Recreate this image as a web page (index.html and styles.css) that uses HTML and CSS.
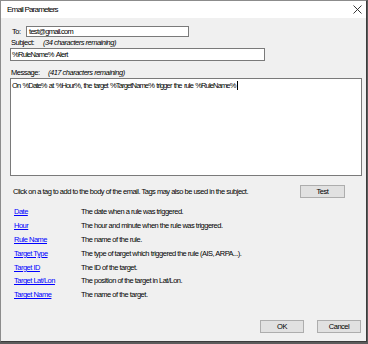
FILE: index.html
```html
<!DOCTYPE html>
<html>
<head>
<meta charset="utf-8">
<link rel="stylesheet" href="styles.css">
</head>
<body>
<div class="window">
  <div class="titlebar">
    <span class="title">Email Parameters</span>
    <svg class="close" width="9" height="9" viewBox="0 0 9 9"><path d="M0.5 0.5 L8.5 8.5 M8.5 0.5 L0.5 8.5" stroke="#222" stroke-width="0.9" fill="none"/></svg>
  </div>
  <div class="content">
    <div class="to-row">
      <span class="to-label">To:</span>
      <div class="field to-field">test@gmail.com</div>
    </div>
    <div class="label-row">
      <span class="subj-label">Subject:</span>
      <span class="note">(34 characters remaining)</span>
    </div>
    <div class="field subj-field">%RuleName% Alert</div>
    <div class="label-row msg-row">
      <span class="msg-label">Message:</span>
      <span class="note">(417 characters remaining)</span>
    </div>
    <div class="field message">On %Date% at %Hour%, the target %TargetName% trigger the rule %RuleName%<span class="caret"></span></div>
    <div class="hint-row">
      <span class="hint">Click on a tag to add to the body of the email. Tags may also be used in the subject.</span>
      <button class="btn test-btn">Test</button>
    </div>
    <div class="tags">
      <a class="tag">Date</a><span class="desc">The date when a rule was triggered.</span>
      <a class="tag">Hour</a><span class="desc">The hour and minute when the rule was triggered.</span>
      <a class="tag">Rule Name</a><span class="desc">The name of the rule.</span>
      <a class="tag">Target Type</a><span class="desc">The type of target which triggered the rule (AIS, ARPA...).</span>
      <a class="tag">Target ID</a><span class="desc">The ID of the target.</span>
      <a class="tag">Target Lat/Lon</a><span class="desc">The position of the target in Lat/Lon.</span>
      <a class="tag">Target Name</a><span class="desc">The name of the target.</span>
    </div>
    <div class="footer">
      <button class="btn">OK</button>
      <button class="btn">Cancel</button>
    </div>
  </div>
</div>
</body>
</html>
```

FILE: styles.css
```css
html, body {
  margin: 0;
  padding: 0;
}
body {
  width: 368px;
  height: 344px;
  background: #5c5c5c;
  overflow: hidden;
  font-family: "Liberation Sans", Arial, sans-serif;
  font-size: 7.5px;
  letter-spacing: -0.5px;
  color: #000;
}
.window {
  box-sizing: border-box;
  width: 367px;
  height: 342px;
  background: #f0f0f0;
  border: 1px solid #8c8c8c;
  border-right-color: #3c3c3c;
  border-bottom-color: #3c3c3c;
  display: flex;
  flex-direction: column;
}
.titlebar {
  height: 17px;
  background: #fff;
  display: flex;
  align-items: center;
  justify-content: space-between;
  padding: 0 4px 0 6px;
}
.title {
  font-size: 8px;
  letter-spacing: -0.8px;
  line-height: 10px;
}
.close {
  display: block;
}
.content {
  padding: 8px 4px 0 9px;
  display: flex;
  flex-direction: column;
}
.to-row {
  display: flex;
  align-items: center;
  height: 11px;
}
.to-label {
  width: 14px;
  margin-left: 2px;
}
.field {
  box-sizing: border-box;
  background: #fff;
  border: 1px solid #7a7a7a;
  line-height: 9px;
  white-space: nowrap;
}
.to-field {
  width: 163px;
  height: 11px;
  padding: 0 2px;
  letter-spacing: -0.7px;
}
.label-row {
  display: flex;
  align-items: center;
  height: 10px;
  line-height: 10px;
  margin-top: 1px;
}
.subj-label {
  width: 32px;
  margin-left: 1px;
}
.msg-label {
  width: 37px;
  margin-left: 1px;
}
.note {
  font-style: italic;
}
.subj-field {
  width: 255px;
  height: 13px;
  padding: 1px 1px;
  letter-spacing: -0.7px;
  word-spacing: 1px;
}
.msg-row {
  margin-top: 7px;
}
.message {
  width: 352px;
  height: 98px;
  padding: 2px 1px;
  line-height: 10px;
  letter-spacing: -0.85px;
  word-spacing: 1px;
}
.caret {
  display: inline-block;
  width: 0;
  height: 9px;
  border-left: 1px solid #000;
  vertical-align: -2px;
  margin-left: 1px;
}
.hint-row {
  display: flex;
  align-items: center;
  justify-content: space-between;
  height: 13px;
  margin-top: 9px;
}
.hint {
  padding-left: 3px;
}
.btn {
  box-sizing: border-box;
  width: 45px;
  height: 13px;
  padding: 0;
  margin: 0;
  background: #e1e1e1;
  border: 1px solid #adadad;
  font-family: inherit;
  font-size: 7.5px;
  letter-spacing: -0.5px;
  line-height: 11px;
  color: #000;
}
.test-btn {
  margin-right: 17px;
}
.tags {
  display: grid;
  grid-template-columns: 67px 1fr;
  grid-auto-rows: 13.8px;
  align-items: center;
  margin-top: 7px;
  padding-left: 4px;
}
.tag {
  color: #0000ff;
  text-decoration: underline;
  cursor: pointer;
}
.footer {
  display: flex;
  justify-content: flex-end;
  gap: 13px;
  margin-top: 18px;
  padding-right: 1px;
}
.footer .btn {
  width: 44px;
}
```
